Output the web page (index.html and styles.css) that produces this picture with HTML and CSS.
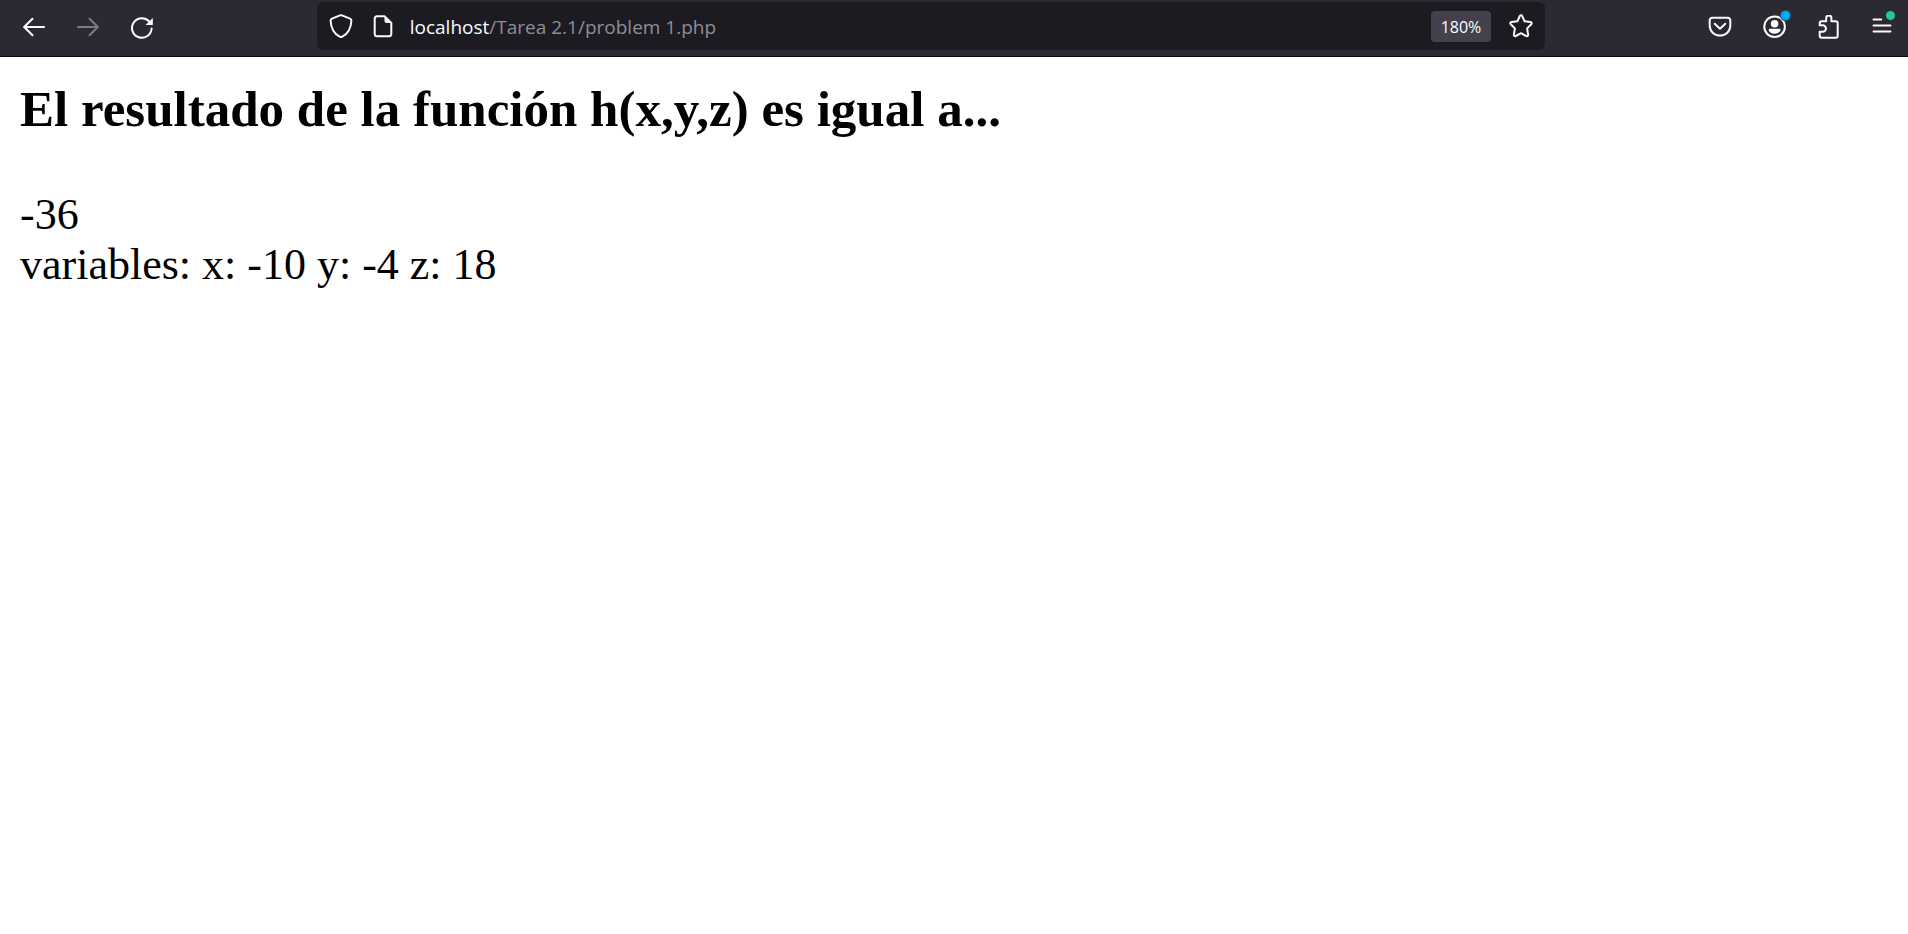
FILE: index.html
```html
<!DOCTYPE html>
<html lang="es">
<head>
<meta charset="utf-8">
<title>problem 1.php</title>
<link rel="stylesheet" href="styles.css">
</head>
<body>
<header class="toolbar">
  <nav class="group" aria-label="Navegación">
    <button class="tool" type="button" aria-label="Atrás">
      <svg class="icon" viewBox="0 0 24 24"><path d="M22 12H2M10.5 3.7 2.2 12l8.300 8.300"/></svg>
    </button>
    <button class="tool" type="button" aria-label="Adelante" disabled>
      <svg class="icon" viewBox="0 0 24 24"><path d="M2 12h20M13.500 3.700 21.800 12l-8.300 8.300"/></svg>
    </button>
    <button class="tool" type="button" aria-label="Recargar">
      <svg class="icon" viewBox="0 0 24 24"><path d="M21.600 13.500A9.800 9.800 0 1 1 19 6.300"/><path class="solid" d="M22.800 3v7h-7.300z"/></svg>
    </button>
  </nav>
  <div class="urlbar">
    <button class="mini" type="button" aria-label="Protección">
      <svg class="icon" viewBox="0 0 24 24"><path d="M11 1.400a2.500 2.500 0 0 1 2 0l8 3.300c1 .5 1.500 1 1.400 2C22 14 18.500 20 13.300 22.700a2.700 2.700 0 0 1-2.600 0C5.500 20 2 14 1.600 6.700c0-1 .4-1.500 1.400-2z"/></svg>
    </button>
    <button class="mini" type="button" aria-label="Información del sitio">
      <svg class="icon" viewBox="0 0 24 24"><path d="M13.500 2.200H6.200a2.500 2.500 0 0 0-2.500 2.500v15a2.500 2.500 0 0 0 2.500 2.500h11.600a2.500 2.500 0 0 0 2.500-2.500V9z"/><path class="solid" d="M13.500 2v4.800c0 1.400.8 2.200 2.200 2.200h5z"/></svg>
    </button>
    <label class="host" for="url">localhost</label>
    <input class="path" id="url" type="text" value="/Tarea 2.1/problem 1.php" spellcheck="false">
    <button class="zoom" type="button">180%</button>
    <button class="mini" type="button" aria-label="Añadir a marcadores">
      <svg class="icon" viewBox="0 0 24 24"><path d="M10.900 1.900c.5-1 1.700-1 2.200 0l2.500 5.300 5.900.8c1.200.2 1.600 1.300.8 2.200l-4.200 4.200 1 6.200c.2 1.200-.8 1.900-1.900 1.400L12 19.200 6.800 22c-1.100.5-2.100-.2-1.900-1.400l1-6.200-4.200-4.200C.9 9.300 1.300 8.200 2.500 8l5.900-.8z"/></svg>
    </button>
  </div>
  <div class="group">
    <button class="tool" type="button" aria-label="Guardar en Pocket">
      <svg class="icon" viewBox="0 0 24 24"><path d="M4.200 2.800h15.600a2.500 2.500 0 0 1 2.500 2.500v5.200c0 5.800-4.500 10-10.300 10s-10.300-4.200-10.300-10V5.300a2.500 2.500 0 0 1 2.500-2.500z"/><path d="m6.700 8.700 5.300 5 5.300-5"/></svg>
    </button>
    <button class="tool" type="button" aria-label="Cuenta">
      <svg class="icon" viewBox="0 0 24 24"><circle cx="12.600" cy="11.700" r="10.300"/><circle class="solid" cx="12.600" cy="8.700" r="3.800"/><path class="solid" d="M8 13.800h9.200c1 0 1.500.6 1.300 1.500-.6 2-3 3.500-5.900 3.500s-5.300-1.500-5.900-3.500c-.2-.9.300-1.500 1.300-1.500z"/></svg>
      <span class="dot dot-account"></span>
    </button>
    <button class="tool" type="button" aria-label="Extensiones">
      <svg class="icon" viewBox="0 0 24 24"><path d="M3.700 9.700V8.200a2 2 0 0 1 2-2h4.500V3a2.600 2.600 0 0 1 5.200 0v3.200h4.300a2 2 0 0 1 2 2v12.500a2 2 0 0 1-2 2H5.700a2 2 0 0 1-2-2v-4h3a3.200 3.200 0 0 0 0-6.500H3.700z"/></svg>
    </button>
    <button class="tool" type="button" aria-label="Menú">
      <svg class="icon" viewBox="0 0 24 24"><path d="M3.500 4.500h7.700M3.500 10.500h17M3.500 16.500h17"/></svg>
      <span class="dot dot-menu"></span>
    </button>
  </div>
</header>
<main class="page">
  <h3 class="title">El resultado de la función h(x,y,z) es igual a...</h3>
  <p class="result">-36<br>variables: x: -10 y: -4 z: 18</p>
</main>
</body>
</html>
```
FILE: styles.css
```css
* {
  box-sizing: border-box;
}

body {
  margin: 0;
  background: #ffffff;
  color: #000000;
}

button {
  border: 0;
  padding: 0;
  background: none;
  color: inherit;
  font: inherit;
}

.toolbar {
  display: flex;
  align-items: flex-start;
  justify-content: space-between;
  padding: 2px 2px 6px 10px;
  border-bottom: 1px solid #0c0c0d;
  background: #2b2a33;
  color: #fbfbfe;
  font-family: "Open Sans", "Noto Sans", sans-serif;
}

.group {
  display: flex;
  gap: 6px;
}

.tool {
  position: relative;
  display: grid;
  place-items: center;
  width: 48px;
  height: 48px;
  padding-top: 2px;
}

.tool:disabled {
  color: #7c7b82;
}

.icon {
  display: block;
  width: 24px;
  height: 24px;
  fill: none;
  stroke: currentColor;
  stroke-width: 2;
  stroke-linecap: round;
  stroke-linejoin: round;
}

.icon .solid {
  fill: currentColor;
  stroke: none;
}

.dot {
  position: absolute;
  top: 9px;
  border-radius: 50%;
  width: 9px;
  height: 9px;
}

.dot-account {
  right: 8px;
  background: #00a8f5;
  box-shadow: 0 0 0 1px #195f88;
}

.dot-menu {
  right: 11px;
  background: #2ac3a2;
}

.urlbar {
  display: flex;
  align-items: center;
  width: 64.8%;
  height: 48px;
  padding: 0 3px;
  border-radius: 6px;
  background: #1c1b22;
  font-size: 19px;
  line-height: 28px;
}

.mini {
  display: grid;
  place-items: center;
  width: 42px;
  height: 42px;
}

.host {
  margin-left: 6px;
  padding-top: 2px;
}

.path {
  flex: 1;
  min-width: 0;
  border: 0;
  padding: 2px 0 0;
  outline: 0;
  background: none;
  color: #8f8e96;
  font: inherit;
}

.zoom {
  margin-right: 9px;
  padding: 1px 10px 0;
  border-radius: 4px;
  background: #42414d;
  font-size: 16px;
  line-height: 30px;
}

.page {
  padding: 23px 20px;
  font-family: "Liberation Serif", "Times New Roman", serif;
  font-size: 44px;
  line-height: 50px;
}

.title {
  margin: 0 0 52px;
  font-size: 51px;
  line-height: 58px;
}

.result {
  margin: 0;
}
```
